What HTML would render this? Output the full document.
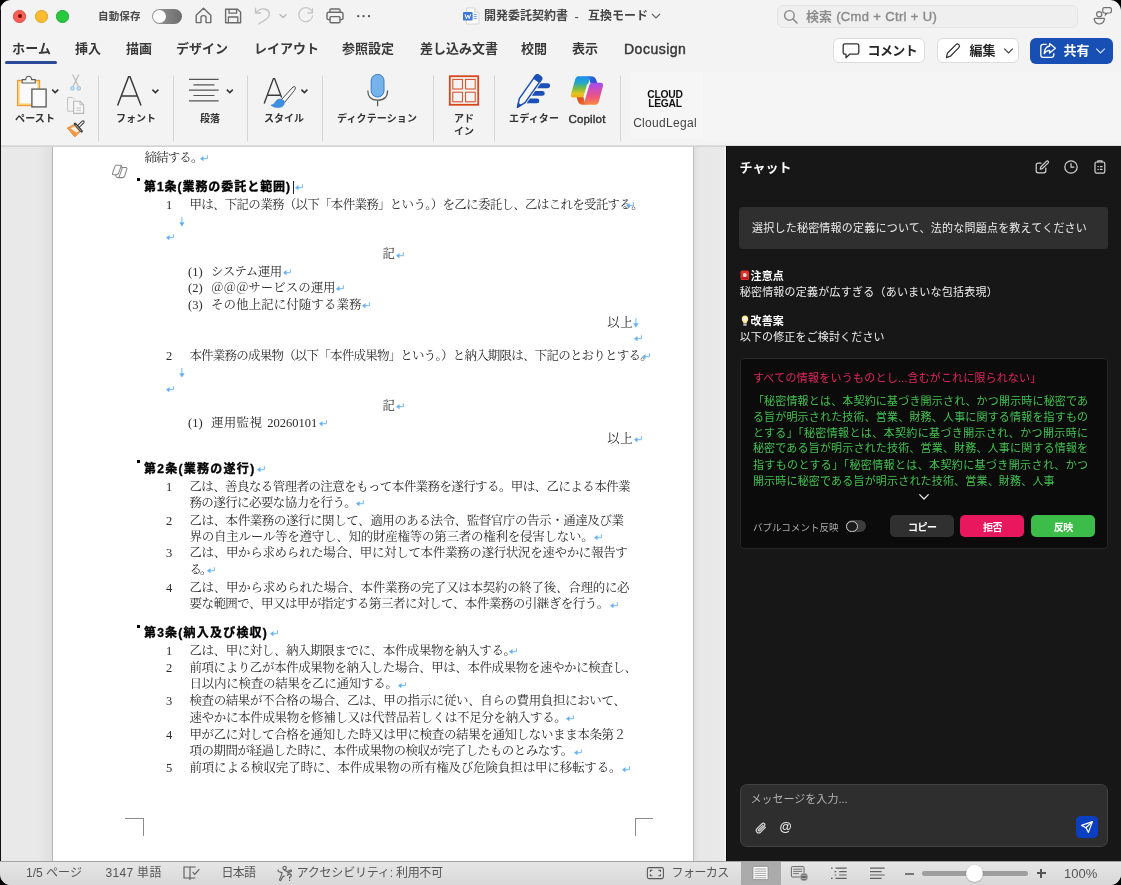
<!DOCTYPE html>
<html lang="ja">
<head>
<meta charset="utf-8">
<title>Word</title>
<style>
*{box-sizing:border-box;margin:0;padding:0}
html,body{width:1121px;height:885px;overflow:hidden;background:#000}
body{font-family:"Liberation Sans","Noto Sans CJK JP",sans-serif;position:relative;color:#333}
.abs{position:absolute}
#win{will-change:transform;position:absolute;left:0;top:0;width:1121px;height:885px;border-radius:11px;background:#f3f3f3;overflow:hidden}
/* title bar */
.tl{position:absolute;top:10px;width:12.5px;height:12.5px;border-radius:50%}
.t{position:absolute;white-space:nowrap;line-height:1;text-align:justify;text-align-last:justify;text-justify:inter-character}
.tab{text-align:justify;text-align-last:justify;text-justify:inter-character;position:absolute;top:42px;font-size:13px;line-height:14px;color:#383838;white-space:nowrap;font-weight:bold;letter-spacing:0}
.sep{position:absolute;top:75px;width:1px;height:67px;background:#d6d6d6}
.rl{position:absolute;font-size:10px;line-height:12px;color:#333;white-space:nowrap;text-align:center;font-weight:bold}
.rj{text-align:justify;text-align-last:justify;text-justify:inter-character}
/* doc */
#docbg{position:absolute;left:0;top:147px;width:726px;height:714px;background:linear-gradient(90deg,#e9e9e9 0,#e9e9e9 38px,#dfdfdf 52px,#dfdfdf 694px,#e8e8e8 700px,#e9e9e9 724px,#f4f4f4 725px)}
#page{position:absolute;left:52px;top:147px;width:642px;height:714px;background:#fff;border-right:1px solid #bdbdbd;border-left:1px solid #b4b4b4}
.ln{position:absolute;font-family:"Liberation Serif","Noto Serif CJK SC","Noto Sans CJK JP",serif;font-size:12.5px;line-height:16px;height:16px;color:#2b2b2b;white-space:nowrap;text-align:justify;text-align-last:justify;text-justify:inter-character;letter-spacing:-0.7px;overflow:visible}
.pc{margin-right:-5.5px}.po{margin-left:-5.5px}
.ln.n{text-align:left;text-align-last:left}
.hd{position:absolute;-webkit-text-stroke:0.35px #000;font-family:"Liberation Sans","Noto Sans CJK JP",sans-serif;font-weight:bold;font-size:12px;line-height:16px;height:16px;color:#000;white-space:nowrap;text-align-last:justify;text-justify:inter-character;letter-spacing:-0.8px}
.pm{color:#6aaef0;font-family:"Liberation Sans","Noto Sans CJK JP",sans-serif;font-size:9px;letter-spacing:0}
.num{position:absolute;font-family:"Liberation Serif",serif;font-size:12.5px;line-height:16px;color:#2b2b2b}
.bul{position:absolute;width:3px;height:3px;background:#000}
/* panel */
#panel{position:absolute;left:726px;top:146px;width:395px;height:715px;background:#171717;color:#fff}

.pt{position:absolute;white-space:nowrap;font-size:11px;line-height:14px;height:14px;color:#ededed;text-align:justify;text-align-last:justify;text-justify:inter-character}
.gl{color:#41c24d}
.btn{position:absolute;top:515px;height:22px;border-radius:5px}
.bt{position:absolute;top:516.5px;height:22px;color:#fff;font-size:10px;font-weight:bold;line-height:22px;white-space:nowrap;letter-spacing:-0.5px;text-align:justify;text-align-last:justify;text-justify:inter-character}
/* status */
#status{position:absolute;left:0;top:861px;width:1121px;height:24px;background:linear-gradient(#e6e6e6,#d8d8d8);border-top:1px solid #a2a2a2}
.st{text-align:justify;text-align-last:justify;text-justify:inter-character;position:absolute;top:867px;font-size:12px;line-height:13px;color:#555;white-space:nowrap}
</style>
</head>
<body>
<div id="win">

<!-- ===== title bar ===== -->
<div class="tl" style="left:13.2px;background:#fe5f57;border:0.5px solid #e0443e"></div>
<div class="abs" style="left:17.5px;top:14.2px;width:4px;height:4px;border-radius:50%;background:#7a0a06"></div>
<div class="tl" style="left:35px;background:#febc2e;border:0.5px solid #e0a028"></div>
<div class="tl" style="left:56.3px;background:#28c840;border:0.5px solid #1eab32"></div>
<div class="t" style="left:98px;top:11px;font-size:10.5px;color:#4a4a4a;font-weight:bold;letter-spacing:-0.5px;width:42px">自動保存</div>
<div class="abs" style="left:152px;top:9px;width:30px;height:15px;border-radius:8px;background:linear-gradient(90deg,#9a9a9a,#6c6c6c)"></div>
<div class="abs" style="left:153px;top:10px;width:13px;height:13px;border-radius:50%;background:#fff"></div>


<!-- title icons -->
<svg class="abs" style="left:194px;top:6px" width="180" height="20" viewBox="0 0 180 20" fill="none" stroke-linecap="round" stroke-linejoin="round">
 <!-- home -->
 <path d="M2.2 9.2 L9.5 2.2 L16.8 9.2 V16.6 H12 V11.2 Q12 9.6 9.5 9.6 Q7 9.6 7 11.2 V16.6 H2.2 Z" stroke="#6b6b6b" stroke-width="1.4"/>
 <!-- save -->
 <path d="M31.6 3.2 H43.5 L46.6 6 V16.8 H31.6 Z" stroke="#6b6b6b" stroke-width="1.4"/>
 <path d="M35 3.4 V7.2 H42.6 V3.4" stroke="#6b6b6b" stroke-width="1.3"/>
 <path d="M34.4 16.6 V11 H43.8 V16.6" stroke="#6b6b6b" stroke-width="1.3"/>
 <!-- undo -->
 <path d="M61.5 2.2 V7 H66.5" stroke="#c2c2c2" stroke-width="1.3"/>
 <path d="M62 6.6 Q65.5 2.4 70.5 3 Q75.6 4 75.4 8.4 Q75.2 11 72 13.4 L64.6 18" stroke="#c2c2c2" stroke-width="1.3"/>
 <!-- chevron -->
 <path d="M86 8.6 L89 11.6 L92 8.6" stroke="#b0b0b0" stroke-width="1.3"/>
 <!-- redo -->
 <path d="M117.4 4.6 A7 7 0 1 0 118.6 10" stroke="#c6c6c6" stroke-width="1.3"/>
 <path d="M118.4 2.6 V7 H113.8" stroke="#c6c6c6" stroke-width="1.3"/>
 <!-- print -->
 <path d="M136 6.2 V4 Q136 3 137 3 H145 Q146 3 146 4 V6.2" stroke="#6b6b6b" stroke-width="1.4"/>
 <path d="M136 13.6 H134.4 Q133 13.6 133 12.2 V8 Q133 6.2 134.8 6.2 H147.2 Q149 6.2 149 8 V12.2 Q149 13.6 147.6 13.6 H146" stroke="#6b6b6b" stroke-width="1.4"/>
 <rect x="136" y="10.6" width="10" height="6.2" rx="1" stroke="#6b6b6b" stroke-width="1.4"/>
 <!-- dots -->
 <circle cx="164.2" cy="10.2" r="1.15" fill="#555"/><circle cx="169.6" cy="10.2" r="1.15" fill="#555"/><circle cx="175" cy="10.2" r="1.15" fill="#555"/>
</svg>
<!-- doc title -->
<svg class="abs" style="left:462px;top:7px" width="18" height="18" viewBox="0 0 18 18">
 <path d="M4.5 1 H12.5 L16.8 5.3 V17 H4.5 Z" fill="#fdfdfd" stroke="#cfcfcf" stroke-width="0.8"/>
 <path d="M12.5 1 V5.3 H16.8" fill="#eee" stroke="#cfcfcf" stroke-width="0.8"/>
 <rect x="1" y="5" width="9.6" height="8.6" rx="0.8" fill="#3f78d8"/>
 <path d="M3 7.2 L4.4 11.6 L5.8 8 L7.2 11.6 L8.6 7.2" fill="none" stroke="#fff" stroke-width="1"/>
 <path d="M11.8 7.6 H14.8 M11.8 9.6 H14.8 M11.8 11.6 H14.8" stroke="#5b8fe0" stroke-width="0.9"/>
</svg>
<div class="t" style="left:484px;top:10px;font-size:12px;color:#454545;font-weight:bold;width:84px">開発委託契約書</div>
<div class="t" style="left:574.5px;top:9.5px;font-size:13px;color:#454545;text-align-last:left">-</div>
<div class="t" style="left:588px;top:10px;font-size:12px;color:#454545;font-weight:bold;width:60px">互換モード</div>
<svg class="abs" style="left:651px;top:12px" width="10" height="8" viewBox="0 0 10 8" fill="none"><path d="M1 2 L5 6 L9 2" stroke="#666" stroke-width="1.2"/></svg>
<!-- search -->
<div class="abs" style="left:777px;top:4.5px;width:301px;height:23px;border-radius:6px;background:#efefef;border:1px solid #e3e3e3"></div>
<svg class="abs" style="left:782px;top:8px" width="18" height="18" viewBox="0 0 18 18" fill="none"><circle cx="7.4" cy="7.4" r="4.8" stroke="#8a8a8a" stroke-width="1.4"/><path d="M11 11 L15 15" stroke="#8a8a8a" stroke-width="1.6" stroke-linecap="round"/></svg>
<div class="t" style="left:806px;top:10px;font-size:13px;color:#8b8b8b;font-weight:bold;width:26px">検索</div>
<div class="t" style="left:836.2px;top:10px;font-size:13px;color:#8b8b8b;font-weight:normal;-webkit-text-stroke:0.4px #8b8b8b;letter-spacing:0.35px;text-align-last:left">(Cmd + Ctrl + U)</div>
<!-- people icon -->
<svg class="abs" style="left:1093px;top:5px" width="22" height="22" viewBox="0 0 22 22" fill="none" stroke="#707070" stroke-width="1.2">
 <circle cx="6.2" cy="9.2" r="2.6"/>
 <path d="M1.6 13.4 H11 Q11.6 13.4 11.4 14.4 Q10.4 19 6.2 19 Q2.2 19 1.2 14.4 Q1 13.4 1.6 13.4 Z"/>
 <path d="M11.2 2.6 H16.8 Q18.4 2.6 18.4 4 V6.6 Q18.4 8 16.8 8 H14.2 L12.4 9.8 L12.6 8 H11.2 Q9.8 8 9.8 6.6 V4 Q9.8 2.6 11.2 2.6 Z"/>
</svg>

<!-- ===== tabs ===== -->
<div class="tab" style="left:12px;width:39px">ホーム</div>
<div class="abs" style="left:5px;top:60.5px;width:52px;height:3px;border-radius:2px;background:#2b4a9a"></div>
<div class="tab" style="left:75px;width:26px">挿入</div>
<div class="tab" style="left:126px;width:26px">描画</div>
<div class="tab" style="left:176px;width:52px">デザイン</div>
<div class="tab" style="left:254px;width:65px">レイアウト</div>
<div class="tab" style="left:342px;width:52px">参照設定</div>
<div class="tab" style="left:420px;width:78px">差し込み文書</div>
<div class="tab" style="left:521px;width:26px">校閲</div>
<div class="tab" style="left:572px;width:26px">表示</div>
<div class="tab" style="left:624px;font-size:14px;font-weight:normal;-webkit-text-stroke:0.45px #383838;letter-spacing:0.5px">Docusign</div>


<!-- right buttons -->
<div class="abs" style="left:833px;top:38px;width:92px;height:25px;border-radius:6px;background:#fff;border:1px solid #dcdcdc"></div>
<svg class="abs" style="left:840.6px;top:42px" width="20" height="18" viewBox="0 0 20 18" fill="none"><path d="M4 1.8 H16 Q17.8 1.8 17.8 3.6 V10.4 Q17.8 12.2 16 12.2 H8.6 L5 15.8 V12.2 H4 Q2.2 12.2 2.2 10.4 V3.6 Q2.2 1.8 4 1.8 Z" stroke="#333" stroke-width="1.3" stroke-linejoin="round"/></svg>
<div class="t" style="left:867.5px;top:44px;font-size:13px;color:#262626;font-weight:bold;letter-spacing:-0.6px;width:49.6px">コメント</div>
<div class="abs" style="left:937px;top:38px;width:82px;height:25px;border-radius:6px;background:#fff;border:1px solid #dcdcdc"></div>
<svg class="abs" style="left:943.6px;top:42px" width="18" height="18" viewBox="0 0 18 18" fill="none"><path d="M2.4 15.6 L3.4 11.2 L12.2 2.4 Q13.4 1.4 14.8 2.6 Q16.2 4 15 5.4 L6.4 14.2 Z" stroke="#333" stroke-width="1.25" stroke-linejoin="round"/></svg>
<div class="t" style="left:969.5px;top:44px;font-size:13px;color:#262626;font-weight:bold;width:26px">編集</div>
<svg class="abs" style="left:1002.8px;top:47px" width="11" height="8" viewBox="0 0 11 8" fill="none"><path d="M1.2 1.6 L5.5 6 L9.8 1.6" stroke="#444" stroke-width="1.2"/></svg>
<div class="abs" style="left:1030px;top:37.5px;width:83px;height:26px;border-radius:6px;background:#174fb4"></div>
<svg class="abs" style="left:1038.2px;top:41px" width="20" height="20" viewBox="0 0 20 20" fill="none" stroke="#fff" stroke-width="1.3" stroke-linejoin="round" stroke-linecap="round"><path d="M8.2 3.4 H5.2 Q2.8 3.4 2.8 5.8 V14 Q2.8 16.4 5.2 16.4 H13.4 Q15.8 16.4 15.8 14 V12.6"/><path d="M11.6 2.4 L17.4 7.2 L11.6 12 V9.4 Q8 9.4 6.2 12.6 Q6.6 5.6 11.6 5 Z"/></svg>
<div class="t" style="left:1063.5px;top:44px;font-size:13px;color:#fff;font-weight:bold;width:26px">共有</div>
<svg class="abs" style="left:1095.4px;top:47px" width="11" height="8" viewBox="0 0 11 8" fill="none"><path d="M1.2 1.6 L5.5 6 L9.8 1.6" stroke="#dfe8fa" stroke-width="1.2"/></svg>


<!-- ===== ribbon ===== -->
<div class="abs" style="left:631px;top:72px;width:72px;height:67px;background:#f6f6f6"></div>
<div class="abs" style="left:704px;top:72px;width:417px;height:69px;background:#f5f5f5"></div>
<div class="abs" style="left:0;top:145px;width:1121px;height:2px;background:linear-gradient(#e2e2e2,#cfcfcf)"></div>
<svg class="abs" style="left:0;top:66px" width="720" height="80" viewBox="0 66 720 80" fill="none">
 <!-- paste -->
 <rect x="17.6" y="80.4" width="22" height="25.2" fill="#fafafa" stroke="#f0902a" stroke-width="1.1"/>
 <rect x="18.9" y="81.7" width="19.4" height="22.6" fill="#fafafa" stroke="#fbd06c" stroke-width="1.6"/>
 <path d="M22.2 83 V79.6 H25.8 Q26 76.2 28.7 76.2 Q31.4 76.2 31.6 79.6 H35.2 V83 Z" fill="#fafafa" stroke="#5a5a5a" stroke-width="1.1"/>
 <rect x="31.9" y="89.1" width="14.2" height="17.8" fill="#fafafa" stroke="#555" stroke-width="1.3"/>
 <path d="M52.2 89.6 L55.2 92.6 L58.2 89.6" stroke="#333" stroke-width="1.5"/>
 <!-- scissors -->
 <path d="M72.6 74.4 L78.4 86.4 M78.8 74.4 L73 86.4" stroke="#bcbcbc" stroke-width="1.25"/>
 <circle cx="72.4" cy="88.4" r="1.7" fill="#cfe3f4" stroke="#a3cbec" stroke-width="1.3"/><circle cx="78.8" cy="88.4" r="1.7" fill="#cfe3f4" stroke="#a3cbec" stroke-width="1.3"/>
 <!-- copy -->
 <path d="M73.4 111.2 H67.6 V97.4 H72.6 L74.6 99.4" stroke="#c2c2c2" stroke-width="1"/>
 <path d="M73.6 101.2 H80 L83.6 104.8 V113.4 H73.6 Z" fill="#f6f6f6" stroke="#b8b8b8" stroke-width="1.1"/>
 <path d="M80 101.2 V104.8 H83.6" stroke="#b8b8b8" stroke-width="0.9"/>
 <path d="M76.4 108 H81 M76.4 110.4 H81" stroke="#c2c2c2" stroke-width="0.9"/>
 <!-- format painter -->
 <path d="M67.2 127.9 L74.4 124.4 L80.3 131.4 L74.8 136.9 Z" fill="#f19a48" stroke="#ec8a34" stroke-width="0.8" stroke-linejoin="round"/>
 <path d="M70.6 128.2 L74.6 126.2 L79 131.2 L76.4 132.6 Q73 130.4 70.6 128.2 Z" fill="#fdf3e8"/>
 <path d="M78.4 126.4 L83 122" stroke="#333" stroke-width="3.3" stroke-linecap="round"/>
 <path d="M78.6 126.2 L83 122" stroke="#f5f5f5" stroke-width="1.4" stroke-linecap="round"/>
 <path d="M75 123.9 L81.5 131.2" stroke="#333" stroke-width="2.6" stroke-linecap="round"/>
 <path d="M75.6 124.9 L80.9 130.8" stroke="#e8e8e8" stroke-width="0.7" stroke-linecap="round"/>
 <!-- sep -->
 <path d="M98.5 75.5 V141.5 M173.5 75.5 V141.5 M247.5 75.5 V141.5 M322.5 75.5 V141.5 M433.5 75.5 V141.5 M494.5 75.5 V141.5 M620.5 75.5 V141.5" stroke="#d4d4d4" stroke-width="1"/>
 <!-- Font A -->
 <path d="M117.6 105.6 L128.6 76.8 H130 L141 105.6 M121.4 96 H137.2" stroke="#3a3a3a" stroke-width="1.5" stroke-linejoin="miter"/>
 <path d="M152.4 89.6 L155.4 92.6 L158.4 89.6" stroke="#333" stroke-width="1.5"/>
 <!-- paragraph -->
 <path d="M189 79.4 H218.6 M193.4 84.8 H214.4 M189 90.2 H218.6 M193.4 95.5 H214.4 M189 100.8 H218.6" stroke="#555" stroke-width="1.2"/>
 <path d="M226.8 89.6 L229.8 92.6 L232.8 89.6" stroke="#333" stroke-width="1.5"/>
 <!-- styles -->
 <path d="M264.2 103.4 L273.4 78.6 H274.6 L281.6 97.4 M267.6 95.2 H280" stroke="#3a3a3a" stroke-width="1.4"/>
 <path d="M281.6 99.4 L293 87 Q295.2 85.6 295.4 87.8 Q295.4 89 294.4 90.4 L284.6 102.4 Z" fill="#f6f6f6" stroke="#4a4a4a" stroke-width="1"/>
 <path d="M271 105.2 Q274.6 104.6 275.6 101.6 Q277.4 98.4 281.4 99.2 Q284.8 100.2 284.2 103.8 Q283.2 107.6 277.6 107.6 Q273.6 107.4 271 105.2 Z" fill="#3d8fe0" stroke="#2b78cc" stroke-width="0.6"/>
 <path d="M301.4 89.6 L304.4 92.6 L307.4 89.6" stroke="#333" stroke-width="1.5"/>
 <!-- dictation -->
 <rect x="371.2" y="74.4" width="12.8" height="22.6" rx="6.4" fill="#76b3ea" stroke="#2f7bd0" stroke-width="1"/>
 <path d="M367.8 90.4 Q367.8 100.2 377.6 100.2 Q387.6 100.2 387.6 90.4" stroke="#555" stroke-width="1.2"/>
 <path d="M377.6 100.4 V106.2" stroke="#555" stroke-width="1.2"/>
 <!-- addin -->
 <rect x="449.8" y="76.2" width="28.4" height="28.6" stroke="#d9481c" stroke-width="1.8"/>
 <rect x="452.8" y="79.4" width="9.6" height="9.6" stroke="#d9481c" stroke-width="1"/>
 <rect x="465.6" y="79.4" width="9.6" height="9.6" stroke="#d9481c" stroke-width="1"/>
 <rect x="452.8" y="92.2" width="9.6" height="9.6" stroke="#d9481c" stroke-width="1"/>
 <rect x="465.6" y="92.2" width="9.6" height="9.6" stroke="#d9481c" stroke-width="1"/>
 <!-- editor -->
 <path d="M535 85.7 H547.7 M529 93.4 H542.3 M523 100.9 H536.9" stroke="#1b50b8" stroke-width="4.9" stroke-linecap="round"/>
 <g transform="translate(517.8 106.8) rotate(35.2)">
  <path d="M0 0.6 L-3.5 -7.6 V-35.4 Q-3.5 -37.8 -1.1 -37.8 H1.1 Q3.5 -37.8 3.5 -35.4 V-7.6 Z" fill="#f3f3f3" stroke="#f3f3f3" stroke-width="3.4" stroke-linejoin="round"/>
  <path d="M0 0.6 L-3.5 -7.6 V-35.4 Q-3.5 -37.8 -1.1 -37.8 H1.1 Q3.5 -37.8 3.5 -35.4 V-7.6 Z" fill="#f7f7f7" stroke="#1b50b8" stroke-width="1.5" stroke-linejoin="round"/>
  <path d="M-3.5 -32.6 V-35.4 Q-3.5 -37.8 -1.1 -37.8 H1.1 Q3.5 -37.8 3.5 -35.4 V-32.6 Z" fill="#1b50b8" stroke="#1b50b8" stroke-width="1.5" stroke-linejoin="round"/>
  <path d="M0 0.6 L-1.6 -3.2 H1.6 Z" fill="#1b50b8" stroke="#1b50b8" stroke-width="1"/>
 </g>
</svg>
<!-- copilot -->
<svg class="abs" style="left:569px;top:74px" width="36" height="32" viewBox="0 0 36 32">
 <defs>
  <linearGradient id="cg1" x1="0" y1="0" x2="1" y2="1"><stop offset="0" stop-color="#1b7fe8"/><stop offset="1" stop-color="#3a3fc4"/></linearGradient>
  <linearGradient id="cg2" x1="0" y1="0" x2="0" y2="1"><stop offset="0" stop-color="#1c8cf0"/><stop offset="0.3" stop-color="#24a6cc"/><stop offset="0.55" stop-color="#6dbd4a"/><stop offset="0.82" stop-color="#e8c41c"/><stop offset="1" stop-color="#f2a81e"/></linearGradient>
  <linearGradient id="cg3" x1="0" y1="0" x2="0" y2="1"><stop offset="0" stop-color="#9d4cf2"/><stop offset="0.35" stop-color="#d24fb4"/><stop offset="0.65" stop-color="#f0567c"/><stop offset="1" stop-color="#f98a3c"/></linearGradient>
  <linearGradient id="cg4" x1="0" y1="0" x2="1" y2="1"><stop offset="0" stop-color="#d8401e"/><stop offset="1" stop-color="#f47a34"/></linearGradient>
 </defs>
 <path d="M17 2.3 H22.5 Q26 2.3 27.2 6 L28.4 9.6 H21.6 L20.4 5.6 Q19.6 3 17 2.3Z" fill="url(#cg1)"/>
 <path d="M19 30.8 H13.5 Q10 30.8 8.8 27 L7.6 23 H14.4 L15.6 27.5 Q16.4 30.1 19 30.8Z" fill="url(#cg4)"/>
 <path d="M9.6 2.3 H17.4 Q21.4 2.3 20.2 6.4 L16 20.6 Q15 23.6 12 23.6 H5 Q1 23.6 2.2 19.4 L6 6 Q7 2.3 9.6 2.3Z" fill="url(#cg2)"/>
 <path d="M26.4 30.8 H18.6 Q14.6 30.8 15.8 26.7 L20 12 Q21 8.7 24 8.7 H31 Q35 8.7 33.8 12.7 L30 27 Q29 30.8 26.4 30.8Z" fill="url(#cg3)"/>
 <path d="M18.2 10.2 L19.9 10.2 L16.2 23 L14.4 23 Z" fill="#f6f6f6"/>
</svg>
<!-- ribbon labels -->
<div class="rl rj" style="left:15px;width:40px;top:113px">ペースト</div>
<div class="rl rj" style="left:116px;width:40px;top:113px">フォント</div>
<div class="rl rj" style="left:200px;width:20px;top:113px">段落</div>
<div class="rl rj" style="left:264px;width:40px;top:113px">スタイル</div>
<div class="rl rj" style="left:337px;width:80px;top:113px">ディクテーション</div>
<div class="rl rj" style="left:454px;width:20px;top:113px">アド</div>
<div class="rl rj" style="left:454px;width:20px;top:126px">イン</div>
<div class="rl rj" style="left:509px;width:50px;top:113px">エディター</div>
<div class="rl" style="left:557px;width:60px;top:113px;font-size:11.5px;font-weight:normal;-webkit-text-stroke:0.4px #333;letter-spacing:0.2px">Copilot</div>
<div class="rl" style="left:634px;width:62px;top:90px;font-size:10.3px;line-height:9.2px;color:#111;letter-spacing:-0.25px">CLOUD<br>LEGAL</div>
<div class="rl" style="left:626px;width:78px;top:117px;font-size:12px;font-weight:normal;color:#444;letter-spacing:0.3px">CloudLegal</div>


<!-- ===== doc ===== -->
<div id="docbg"></div>
<div id="page"></div>
<!--DOC-START-->
<svg width="0" height="0" style="position:absolute"><defs>
<symbol id="ret" viewBox="0 0 8 7"><path d="M7.4 0.3 V3.7 H3" fill="none" stroke="#64b1f8" stroke-width="0.9"/><path d="M0 3.7 L3.5 1.1 V6.3 Z" fill="#64b1f8"/></symbol>
<symbol id="dn" viewBox="0 0 6 10"><path d="M2.9 0 V6" fill="none" stroke="#64b1f8" stroke-width="0.9"/><path d="M0.2 5.2 H5.6 L2.9 9.4 Z" fill="#64b1f8"/></symbol>
</defs></svg>
<div class="ln" style="left:144.5px;top:149.5px;width:55.1px;letter-spacing:-0.9px">締結する。</div>
<div class="ln" style="left:189.4px;top:196.7px;width:436.0px;letter-spacing:-0.71px">甲は、下記の業務（以下「本件業務」という。）を乙に委託し、乙はこれを受託する。</div>
<div class="ln" style="left:382.4px;top:246.3px;width:12.0px;letter-spacing:-1.02px">記</div>
<div class="ln" style="left:211.0px;top:263.5px;width:70.0px;letter-spacing:-1.35px">システム運用</div>
<div class="ln" style="left:211.0px;top:280.0px;width:124.0px;letter-spacing:-0.62px">＠＠＠サービスの運用</div>
<div class="ln" style="left:211.0px;top:297.0px;width:150.0px;letter-spacing:-0.52px">その他上記に付随する業務</div>
<div class="ln" style="left:607.3px;top:314.7px;width:25.0px;letter-spacing:-0.52px">以上</div>
<div class="ln" style="left:189.4px;top:348.0px;width:451.0px;letter-spacing:-0.78px">本件業務の成果物（以下「本件成果物」という。）と納入期限は、下記のとおりとする。</div>
<div class="ln" style="left:382.4px;top:397.7px;width:12.0px;letter-spacing:-1.02px">記</div>
<div class="ln" style="left:607.3px;top:431.0px;width:25.0px;letter-spacing:-0.52px">以上</div>
<div class="ln" style="left:189.4px;top:478.7px;width:440.4px;letter-spacing:-0.67px">乙は、善良なる管理者の注意をもって本件業務を遂行する。甲は、乙による本件業</div>
<div class="ln" style="left:189.4px;top:494.5px;width:166.7px;letter-spacing:-0.72px">務の遂行に必要な協力を行う。</div>
<div class="ln" style="left:189.4px;top:513.0px;width:434.1px;letter-spacing:-0.5px">乙は、本件業務の遂行に関して、適用のある法令、監督官庁の告示・通達及び業</div>
<div class="ln" style="left:189.4px;top:528.5px;width:403.8px;letter-spacing:-0.45px">界の自主ルール等を遵守し、知的財産権等の第三者の権利を侵害しない。</div>
<div class="ln" style="left:189.4px;top:545.3px;width:437.9px;letter-spacing:-0.55px">乙は、甲から求められた場合、甲に対して本件業務の遂行状況を速やかに報告す</div>
<div class="ln" style="left:189.4px;top:562.0px;width:16.8px;letter-spacing:-1.87px">る。</div>
<div class="ln" style="left:189.4px;top:579.6px;width:439.9px;letter-spacing:-0.34px">乙は、甲から求められた場合、本件業務の完了又は本契約の終了後、合理的に必</div>
<div class="ln" style="left:189.4px;top:596.3px;width:419.2px;letter-spacing:-0.57px">要な範囲で、甲又は甲が指定する第三者に対して、本件業務の引継ぎを行う。</div>
<div class="ln" style="left:189.4px;top:642.7px;width:318.2px;letter-spacing:-0.42px">乙は、甲に対し、納入期限までに、本件成果物を納入する。</div>
<div class="ln" style="left:189.4px;top:660.2px;width:447.2px;letter-spacing:-0.49px">前項により乙が本件成果物を納入した場合、甲は、本件成果物を速やかに検査し、</div>
<div class="ln" style="left:189.4px;top:676.3px;width:208.2px;letter-spacing:-0.45px">日以内に検査の結果を乙に通知する。</div>
<div class="ln" style="left:189.4px;top:693.0px;width:433.2px;letter-spacing:-0.38px">検査の結果が不合格の場合、乙は、甲の指示に従い、自らの費用負担において、</div>
<div class="ln" style="left:189.4px;top:709.8px;width:376.8px;letter-spacing:-0.69px">速やかに本件成果物を修補し又は代替品若しくは不足分を納入する。</div>
<div class="ln" style="left:189.4px;top:727.0px;width:435.9px;letter-spacing:-0.91px">甲が乙に対して合格を通知した時又は甲に検査の結果を通知しないまま本条第２</div>
<div class="ln" style="left:189.4px;top:743.4px;width:383.2px;letter-spacing:-0.7px">項の期間が経過した時に、本件成果物の検収が完了したものとみなす。</div>
<div class="ln" style="left:189.4px;top:760.3px;width:431.8px;letter-spacing:-0.37px">前項による検収完了時に、本件成果物の所有権及び危険負担は甲に移転する。</div>
<div class="ln" style="left:211px;top:414.8px;width:50.6px;letter-spacing:-0.35px">運用監視</div>
<div class="num" style="left:267.2px;top:414.8px">20260101</div>
<div class="hd" style="left:144.0px;top:179.0px;width:147.0px;letter-spacing:0.93px">第1条(業務の委託と範囲)</div>
<div class="hd" style="left:144.0px;top:460.8px;width:111.4px;letter-spacing:1.25px">第2条(業務の遂行)</div>
<div class="hd" style="left:144.0px;top:625.0px;width:124.0px;letter-spacing:1.19px">第3条(納入及び検収)</div>
<div class="num" style="left:166px;top:196.7px">1</div>
<div class="num" style="left:166px;top:348.0px">2</div>
<div class="num" style="left:166px;top:478.7px">1</div>
<div class="num" style="left:166px;top:513.0px">2</div>
<div class="num" style="left:166px;top:545.3px">3</div>
<div class="num" style="left:166px;top:579.6px">4</div>
<div class="num" style="left:166px;top:642.7px">1</div>
<div class="num" style="left:166px;top:660.2px">2</div>
<div class="num" style="left:166px;top:693.0px">3</div>
<div class="num" style="left:166px;top:727.0px">4</div>
<div class="num" style="left:166px;top:760.3px">5</div>
<div class="num" style="left:188px;top:263.5px">(1)</div>
<div class="num" style="left:188px;top:280.0px">(2)</div>
<div class="num" style="left:188px;top:297.0px">(3)</div>
<div class="num" style="left:188px;top:414.8px">(1)</div>
<svg class="abs" style="left:200.0px;top:154.9px" width="8" height="7"><use href="#ret"/></svg>
<svg class="abs" style="left:295.0px;top:184.4px" width="8" height="7"><use href="#ret"/></svg>
<svg class="abs" style="left:626.0px;top:202.1px" width="8" height="7"><use href="#ret"/></svg>
<svg class="abs" style="left:395.5px;top:251.7px" width="8" height="7"><use href="#ret"/></svg>
<svg class="abs" style="left:283.0px;top:268.9px" width="8" height="7"><use href="#ret"/></svg>
<svg class="abs" style="left:335.5px;top:285.4px" width="8" height="7"><use href="#ret"/></svg>
<svg class="abs" style="left:362.0px;top:302.4px" width="8" height="7"><use href="#ret"/></svg>
<svg class="abs" style="left:642.3px;top:353.4px" width="8" height="7"><use href="#ret"/></svg>
<svg class="abs" style="left:395.5px;top:403.1px" width="8" height="7"><use href="#ret"/></svg>
<svg class="abs" style="left:319.3px;top:420.2px" width="8" height="7"><use href="#ret"/></svg>
<svg class="abs" style="left:633.5px;top:436.4px" width="8" height="7"><use href="#ret"/></svg>
<svg class="abs" style="left:257.3px;top:466.2px" width="8" height="7"><use href="#ret"/></svg>
<svg class="abs" style="left:356.0px;top:499.9px" width="8" height="7"><use href="#ret"/></svg>
<svg class="abs" style="left:593.6px;top:533.9px" width="8" height="7"><use href="#ret"/></svg>
<svg class="abs" style="left:207.4px;top:567.4px" width="8" height="7"><use href="#ret"/></svg>
<svg class="abs" style="left:609.8px;top:601.7px" width="8" height="7"><use href="#ret"/></svg>
<svg class="abs" style="left:269.8px;top:630.4px" width="8" height="7"><use href="#ret"/></svg>
<svg class="abs" style="left:509.4px;top:648.1px" width="8" height="7"><use href="#ret"/></svg>
<svg class="abs" style="left:398.4px;top:681.7px" width="8" height="7"><use href="#ret"/></svg>
<svg class="abs" style="left:566.0px;top:715.2px" width="8" height="7"><use href="#ret"/></svg>
<svg class="abs" style="left:573.6px;top:748.8px" width="8" height="7"><use href="#ret"/></svg>
<svg class="abs" style="left:621.8px;top:765.7px" width="8" height="7"><use href="#ret"/></svg>
<svg class="abs" style="left:166.0px;top:234.4px" width="8" height="7"><use href="#ret"/></svg>
<svg class="abs" style="left:633.5px;top:335.3px" width="8" height="7"><use href="#ret"/></svg>
<svg class="abs" style="left:166.0px;top:386.0px" width="8" height="7"><use href="#ret"/></svg>
<svg class="abs" style="left:179.2px;top:217.2px" width="6" height="10"><use href="#dn"/></svg>
<svg class="abs" style="left:633.4px;top:317.6px" width="6" height="10"><use href="#dn"/></svg>
<svg class="abs" style="left:179.4px;top:368.2px" width="6" height="10"><use href="#dn"/></svg>
<div class="bul" style="left:137px;top:178.1px"></div>
<div class="bul" style="left:137px;top:459.7px"></div>
<div class="bul" style="left:137px;top:625.2px"></div>
<div class="abs" style="left:293px;top:181px;width:1px;height:13px;background:#222"></div>
<svg class="abs" style="left:111px;top:164px" width="18" height="15" viewBox="0 0 18 15" fill="none" stroke="#858585" stroke-width="1.05"><path d="M5.4 1.2 H9.4 Q10.6 1.2 10 2.6 L7.4 9.6 Q6.8 10.8 5.6 10.8 H2.4 Q1 10.6 1.6 9 L4 2.4 Q4.4 1.2 5.4 1.2 Z"/><path d="M10.6 3.4 H14.6 Q16.4 3.6 15.8 5.4 L13.6 12 Q13 13.6 11.6 13.6 H6.6 Q5.6 13.6 5.2 12.6 L4.6 10.8"/><path d="M10 1.6 L11 3.6 M8 13.4 L11.4 3.6"/></svg>
<div class="abs" style="left:125px;top:817.5px;width:18.5px;height:18.5px;border-top:1px solid #8a8a8a;border-right:1px solid #8a8a8a"></div>
<div class="abs" style="left:635px;top:817.5px;width:18px;height:18.5px;border-top:1px solid #8a8a8a;border-left:1px solid #8a8a8a"></div>
<!--DOC-END-->


<!-- ===== panel ===== -->
<div id="panel"></div>
<div class="abs" style="left:726px;top:146px;width:1px;height:715px;background:#0a0a0a"></div>
<div class="t" style="left:739.5px;top:160.7px;font-size:13px;font-weight:bold;color:#fff;letter-spacing:-0.5px;width:51.5px">チャット</div>
<svg class="abs" style="left:1034px;top:159px" width="76" height="16" viewBox="0 0 76 16" fill="none" stroke="#d2d2d2" stroke-width="1.2" stroke-linecap="round" stroke-linejoin="round">
 <path d="M7 4.2 H4.2 Q2.2 4.2 2.2 6.2 V11.8 Q2.2 13.8 4.2 13.8 H9.8 Q11.8 13.8 11.8 11.8 V9.2"/>
 <path d="M6.2 10.2 L6.8 8 L12.6 2.2 Q13.4 1.6 14.2 2.3 Q14.9 3.1 14.2 3.9 L8.4 9.6 Z"/>
 <circle cx="37" cy="8" r="6.2"/><path d="M37 4.6 V8.2 H39.8"/>
 <rect x="61" y="3" width="9.8" height="11.2" rx="1.6"/><path d="M63.8 3 V1.8 H68 V3" /><path d="M64 7.6 H64.2 M66.4 7.6 H68 M64 10.4 H64.2 M66.4 10.4 H68" stroke-width="1.3"/>
</svg>
<div class="abs" style="left:738.6px;top:207px;width:369.5px;height:41.5px;border-radius:4px;background:#2f2f2f"></div>
<div class="pt" style="left:752px;top:221px;width:335px;letter-spacing:0.14px">選択した秘密情報の定義について、法的な問題点を教えてください</div>
<!-- siren emoji -->
<svg class="abs" style="left:739.5px;top:270px" width="9.5" height="10.5" viewBox="0 0 19 21"><rect x="1" y="1" width="17" height="19" rx="3" fill="#e0302c"/><rect x="6" y="6" width="7" height="8" rx="3" fill="#ffd9d0"/><rect x="3" y="15" width="13" height="3" fill="#b01818"/></svg>
<div class="pt" style="left:750.4px;top:268.7px;font-weight:bold;color:#fff;width:33.6px;letter-spacing:0.1px">注意点</div>
<div class="pt" style="left:739.7px;top:285px;width:258px;letter-spacing:-0.05px">秘密情報の定義が広すぎる（あいまいな包括表現）</div>
<!-- bulb emoji -->
<svg class="abs" style="left:740.5px;top:314.5px" width="8" height="11.5" viewBox="0 0 16 23"><path d="M8 1 Q14.5 1 14.5 8 Q14.5 11.6 11.6 14.4 V16.4 H4.4 V14.4 Q1.5 11.6 1.5 8 Q1.5 1 8 1 Z" fill="#fbe79a"/><path d="M8 4 Q11.4 4 11.4 8 Q11.4 10.6 8 12 Q4.6 10.6 4.6 8 Q4.6 4 8 4Z" fill="#fffbe6"/><rect x="4.6" y="17" width="6.8" height="4.6" rx="1.2" fill="#bdbdbd"/></svg>
<div class="pt" style="left:750.4px;top:313.5px;font-weight:bold;color:#fff;width:33.6px;letter-spacing:0.1px">改善案</div>
<div class="pt" style="left:739.7px;top:330px;width:145px;letter-spacing:0.1px">以下の修正をご検討ください</div>
<!-- card -->
<div class="abs" style="left:739.5px;top:358px;width:368.5px;height:190.5px;border-radius:4px;background:#0b0b0b;border:1px solid #272727"></div>
<div class="pt" style="left:752.9px;top:371px;color:#e62560;letter-spacing:0.15px;width:145px">すべての情報をいうものとし</div>
<div class="pt" style="left:897.9px;top:371px;color:#e62560;text-align-last:left;letter-spacing:0.15px">...</div>
<div class="pt" style="left:907.5px;top:371px;color:#e62560;letter-spacing:0.15px;width:133.8px">含むがこれに限られない」</div>
<div class="pt gl" style="left:752.9px;top:394.2px;width:335.4px;letter-spacing:0.16px">「秘密情報とは、本契約に基づき開示され、かつ開示時に秘密であ</div>
<div class="pt gl" style="left:752.9px;top:409.9px;width:335.4px;letter-spacing:0.16px">る旨が明示された技術、営業、財務、人事に関する情報を指すもの</div>
<div class="pt gl" style="left:752.9px;top:426.0px;width:335.4px;letter-spacing:0.16px">とする」「秘密情報とは、本契約に基づき開示され、かつ開示時に</div>
<div class="pt gl" style="left:752.9px;top:441.4px;width:335.4px;letter-spacing:0.16px">秘密である旨が明示された技術、営業、財務、人事に関する情報を</div>
<div class="pt gl" style="left:752.9px;top:457.8px;width:335.4px;letter-spacing:0.16px">指すものとする」「秘密情報とは、本契約に基づき開示され、かつ</div>
<div class="pt gl" style="left:752.9px;top:473.6px;width:301.9px;letter-spacing:0.16px">開示時に秘密である旨が明示された技術、営業、財務、人事</div>
<svg class="abs" style="left:917.5px;top:493px" width="12" height="8" viewBox="0 0 12 8" fill="none"><path d="M1.4 1.4 L6 6 L10.6 1.4" stroke="#e8e8e8" stroke-width="1.3"/></svg>
<div class="t" style="left:752.9px;top:523px;font-size:9.5px;color:#ababab;letter-spacing:-0.55px;width:85.1px">バブルコメント反映</div>
<div class="abs" style="left:846px;top:520.3px;width:20px;height:12px;border-radius:6px;background:#3c3c3c"></div>
<div class="abs" style="left:846.4px;top:520.5px;width:11.6px;height:11.6px;border-radius:50%;background:#1c1c1c;border:1.2px solid #d0d0d0"></div>
<div class="btn" style="left:890px;width:64px;background:#303030"></div><div class="bt" style="left:908px;width:28.5px">コピー</div>
<div class="btn" style="left:960.4px;width:64px;background:#e9175d"></div><div class="bt" style="left:983.1px;width:19px">拒否</div>
<div class="btn" style="left:1031.2px;width:63.8px;background:#3cbc48"></div><div class="bt" style="left:1053.8px;width:19px">反映</div>
<!-- input -->
<div class="abs" style="left:739.5px;top:784.3px;width:368.5px;height:63px;border-radius:7px;background:#2e2e2e;border:1px solid #424242"></div>
<div class="t" style="left:750.4px;top:794px;font-size:11px;color:#b4b4b4;width:88px">メッセージを入力</div>
<div class="t" style="left:838.4px;top:794px;font-size:11px;color:#b4b4b4;text-align-last:left">...</div>
<svg class="abs" style="left:753.5px;top:820.5px" width="14" height="14" viewBox="0 0 14 14" fill="none" stroke="#e0e0e0" stroke-width="1.15" stroke-linecap="round"><path d="M11.4 6.4 L6.6 11.2 Q4.8 12.8 3 11.2 Q1.4 9.4 3 7.6 L8 2.6 Q9.2 1.6 10.4 2.6 Q11.4 3.8 10.4 5 L5.6 9.8 Q5 10.2 4.5 9.8 Q4.1 9.2 4.6 8.6 L9 4.2"/></svg>
<div class="t" style="left:779.5px;top:820.5px;font-size:12.5px;color:#e6e6e6;font-weight:bold;text-align-last:left">@</div>
<div class="abs" style="left:1076px;top:816.2px;width:22px;height:22px;border-radius:4.5px;background:#0b3fc2"></div>
<svg class="abs" style="left:1080px;top:820.4px" width="14" height="14" viewBox="0 0 14 14" fill="none" stroke="#fff" stroke-width="1.2" stroke-linejoin="round" stroke-linecap="round"><path d="M12.4 1.6 L1.6 5.4 L6 7.8 L8.4 12.4 Z"/><path d="M12.2 1.8 L6 7.8"/></svg>

<div class="abs" style="left:0;top:0;width:1px;height:885px;background:#111"></div>
<!-- ===== status ===== -->
<div id="status"></div>
<div class="st" style="left:26px;text-align-last:left">1/5</div>
<div class="st" style="left:46px;width:36px">ページ</div>
<div class="st" style="left:105.5px;letter-spacing:0.3px;text-align-last:left">3147</div>
<div class="st" style="left:137px;width:24.6px">単語</div>
<svg class="abs" style="left:182px;top:865px" width="20" height="16" viewBox="0 0 20 16" fill="none" stroke="#5a5a5a" stroke-width="1.1"><path d="M8 2 V13 H2 V2 H8 M8 2 H13.6 M8 13 H13.4 M8 13 V15"/><path d="M10.6 7 L12.8 9.4 L17.4 4.2"/></svg>
<div class="st" style="left:221.5px;letter-spacing:-0.7px;width:33.9px">日本語</div>
<svg class="abs" style="left:276px;top:864.5px" width="19" height="18" viewBox="0 0 19 18" fill="none" stroke="#5a5a5a" stroke-width="1.1" stroke-linecap="round" stroke-linejoin="round"><circle cx="8.6" cy="3" r="1.7"/><path d="M2.2 5 Q1.6 6.4 3 6.8 L6 7.6 L5.4 10.4 L3.6 14.6 Q3.4 15.8 4.6 15.8 L7 11.6 L8.6 11 M8.6 5.4 L11.4 6.4 L14.4 5 Q15.6 4.8 15.4 6.2 L11.4 8"/><path d="M11.6 10.4 Q11.8 8.8 13.6 8.8 Q15.4 9 15.2 10.6 Q15 11.6 13.6 12.2 V13.2 M13.6 15.2 V15.4" stroke-width="1.2"/></svg>
<div class="st" style="left:296.5px;letter-spacing:-0.35px;width:93px">アクセシビリティ</div>
<div class="st" style="left:389.8px;text-align-last:left">:</div>
<div class="st" style="left:396px;letter-spacing:-0.35px;width:46.3px">利用不可</div>
<svg class="abs" style="left:646px;top:866px" width="19" height="14" viewBox="0 0 19 14" fill="none" stroke="#5a5a5a" stroke-width="1.1"><rect x="1.4" y="1.6" width="16" height="11" rx="1.6"/><path d="M4.4 6 V4.4 H6.4 M12.4 4.4 H14.4 V6 M14.4 8.2 V9.8 H12.4 M6.4 9.8 H4.4 V8.2"/></svg>
<div class="st" style="left:671.5px;letter-spacing:-0.55px;width:57.3px">フォーカス</div>
<div class="abs" style="left:741.4px;top:862px;width:39.4px;height:23px;background:#ababab"></div>
<svg class="abs" style="left:741px;top:862px" width="150" height="23" viewBox="741 862 150 23" fill="none">
 <rect x="753" y="866.4" width="15" height="13.2" rx="0.8" fill="#fff" stroke="#8c8c8c" stroke-width="0.8"/>
 <path d="M754.6 869 H766.4 M754.6 871.2 H766.4 M754.6 873.4 H766.4 M754.6 875.6 H766.4 M754.6 877.8 H766.4" stroke="#9a9a9a" stroke-width="0.9"/>
 <rect x="791.4" y="866.6" width="12.6" height="10.4" rx="0.8" stroke="#666" stroke-width="1"/>
 <path d="M793.2 869.2 H802.2 M793.2 871.4 H802.2 M793.2 873.6 H799" stroke="#666" stroke-width="0.9"/>
 <circle cx="804" cy="877" r="3.9" fill="#6a6a6a" stroke="#dcdcdc" stroke-width="0.6"/>
 <path d="M801.4 875.6 Q804 874.6 806.6 875.8 M801.2 878.2 Q804 879.4 806.8 878" stroke="#dcdcdc" stroke-width="0.6"/>
 <path d="M831 868.2 H832.6 M835.6 868.2 H846.6 M834.6 871.6 H836.2 M839.2 871.6 H846.6 M834.6 875 H836.2 M839.2 875 H846.6 M831 878.4 H832.6 M835.6 878.4 H846.6" stroke="#606060" stroke-width="1.2"/>
 <path d="M870 868.2 H884.6 M870 871.6 H881.6 M870 875 H884.6 M870 878.4 H881.6" stroke="#606060" stroke-width="1.2"/>
</svg>
<div class="abs" style="left:905.4px;top:872.6px;width:8.6px;height:2px;background:#777"></div>
<div class="abs" style="left:922px;top:871.3px;width:106px;height:4.6px;border-radius:2.3px;background:#9e9e9e"></div>
<div class="abs" style="left:966px;top:864.8px;width:17.4px;height:17.4px;border-radius:50%;background:#fff;box-shadow:0 0.5px 1.5px rgba(0,0,0,0.35)"></div>
<div class="abs" style="left:1036.8px;top:872.4px;width:9px;height:1.8px;background:#555"></div>
<div class="abs" style="left:1040.4px;top:868.8px;width:1.8px;height:9px;background:#555"></div>
<div class="st" style="left:1064px;font-size:13px;top:866.5px;text-align-last:left">100%</div>

</div>
</body>
</html>
